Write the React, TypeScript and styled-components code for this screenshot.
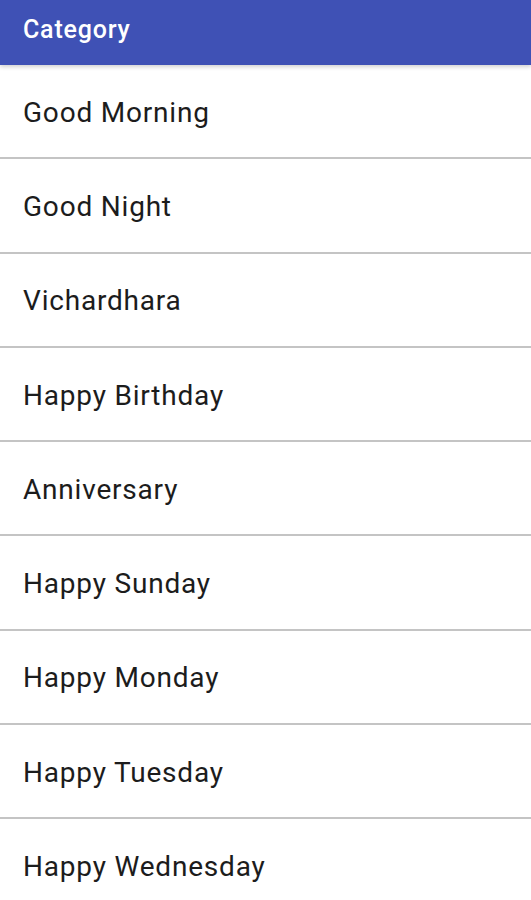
import React from "react";
import styled, { createGlobalStyle } from "styled-components";

const GlobalStyle = createGlobalStyle`
  html, body {
    margin: 0;
    padding: 0;
    background: #ffffff;
    font-family: Roboto, "Liberation Sans", sans-serif;
  }
`;

const Page = styled.div`
  display: flex;
  flex-direction: column;
  width: 100%;
  min-height: 900px;
  background: #ffffff;
`;

const Toolbar = styled.header`
  display: flex;
  align-items: center;
  height: 65px;
  padding: 0 23px;
  padding-bottom: 6px;
  box-sizing: border-box;
  background: #3f51b5;
  color: #ffffff;
  font-size: 25px;
  font-weight: 500;
  letter-spacing: 0.8px;
  box-shadow: 0 2px 4px rgba(0, 0, 0, 0.18);
  position: relative;
  z-index: 1;
`;

const List = styled.ul`
  list-style: none;
  margin: 0;
  padding: 0;
`;

const Row = styled.li`
  display: flex;
  align-items: center;
  height: 94.3px;
  box-sizing: border-box;
  padding: 2px 23px 0;
  border-bottom: 2px solid #c4c4c4;
  color: #1c1c1c;
  font-size: 28px;
  font-weight: 400;
  letter-spacing: 0.8px;
`;

const categories = [
  "Good Morning",
  "Good Night",
  "Vichardhara",
  "Happy Birthday",
  "Anniversary",
  "Happy Sunday",
  "Happy Monday",
  "Happy Tuesday",
  "Happy Wednesday",
];

export default function App() {
  return (
    <>
      <GlobalStyle />
      <Page>
        <Toolbar>Category</Toolbar>
        <List>
          {categories.map((c) => (
            <Row key={c}>{c}</Row>
          ))}
        </List>
      </Page>
    </>
  );
}
